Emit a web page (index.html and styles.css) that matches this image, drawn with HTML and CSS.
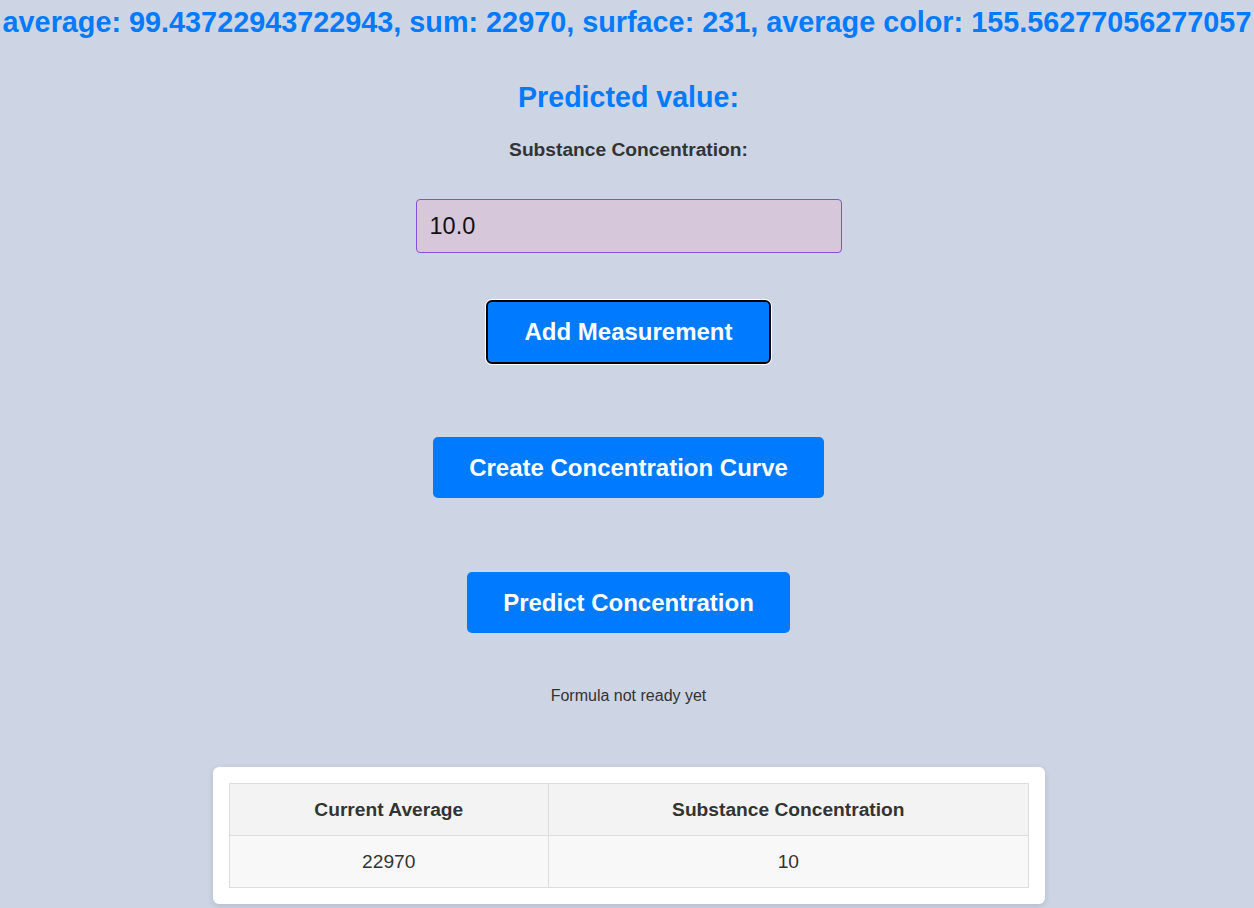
FILE: index.html
```html
<!DOCTYPE html>
<html lang="en">
<head>
  <meta charset="UTF-8" />
  <meta name="viewport" content="width=device-width, initial-scale=1.0"/>
  <title>Concentration</title>
  <link rel="stylesheet" href="styles.css">
</head>
<body>

  <h1 class="stats">average: 99.43722943722943, sum: 22970, surface: 231, average color: 155.56277056277057</h1>

  <div class="main-content">
    <h2 class="predicted">Predicted value:</h2>
    <label class="field-label" for="concentration">Substance Concentration:</label>
    <input class="field-input" id="concentration" type="text" value="10.0">

    <button class="btn btn-focused">Add Measurement</button>
    <button class="btn">Create Concentration Curve</button>
    <button class="btn">Predict Concentration</button>

    <p class="formula">Formula not ready yet</p>

    <div class="table-card">
      <table class="data-table">
        <thead>
          <tr>
            <th>Current Average</th>
            <th>Substance Concentration</th>
          </tr>
        </thead>
        <tbody>
          <tr>
            <td>22970</td>
            <td>10</td>
          </tr>
        </tbody>
      </table>
    </div>
  </div>

</body>
</html>
```

FILE: styles.css
```css
html, body {
  margin: 0;
  padding: 0;
  font-family: "Liberation Sans", Arial, sans-serif;
  color: #333;
  text-align: center;
}
body {
  background-color: #cdd4e4;
  min-height: 100vh;
}
.stats {
  margin: 0;
  padding-top: 6px;
  font-size: 28.8px;
  font-weight: bold;
  color: #007bff;
  white-space: nowrap;
}
.main-content {
  display: flex;
  flex-direction: column;
  align-items: center;
  padding-left: 3px;
}
.predicted {
  margin: 42px 0 0;
  font-size: 28.6px;
  font-weight: bold;
  color: #007bff;
}
.field-label {
  margin-top: 25px;
  font-size: 19.2px;
  font-weight: bold;
  color: #333;
}
.field-input {
  margin-top: 38px;
  width: 426px;
  height: 54px;
  box-sizing: border-box;
  padding: 0 13px;
  font-family: "Liberation Sans", Arial, sans-serif;
  font-size: 23.5px;
  color: #111;
  background-color: #d6c8da;
  border: 1px solid #8a4fd8;
  border-radius: 4px;
  outline: none;
}
.btn {
  margin-top: 47px;
  padding: 0 36px;
  height: 61px;
  font-family: "Liberation Sans", Arial, sans-serif;
  font-size: 24px;
  font-weight: bold;
  color: white;
  background-color: #007bff;
  border: none;
  border-radius: 5px;
  cursor: pointer;
}
.btn + .btn {
  margin-top: 73px;
}
.btn + .btn + .btn {
  margin-top: 74px;
}
.btn-focused {
  height: 64px;
  border: 2px solid #000;
  box-shadow: 0 0 0 1px #fff;
  border-radius: 6px;
}
.formula {
  margin: 54px 0 0;
  font-size: 16px;
  color: #333;
}
.table-card {
  margin-top: 62px;
  width: 832px;
  box-sizing: border-box;
  padding: 16px;
  background: #fff;
  border-radius: 6px;
  box-shadow: 0 2px 6px rgba(0, 0, 0, 0.12);
}
.data-table {
  width: 100%;
  border-collapse: collapse;
  font-size: 19.2px;
}
.data-table th,
.data-table td {
  height: 51px;
  border: 1px solid #ddd;
  padding: 0 12px;
}
.data-table th {
  background-color: #f3f3f3;
  font-weight: bold;
  width: 40%;
}
.data-table th + th {
  width: 60%;
}
.data-table td {
  background-color: #f8f8f8;
}
```
